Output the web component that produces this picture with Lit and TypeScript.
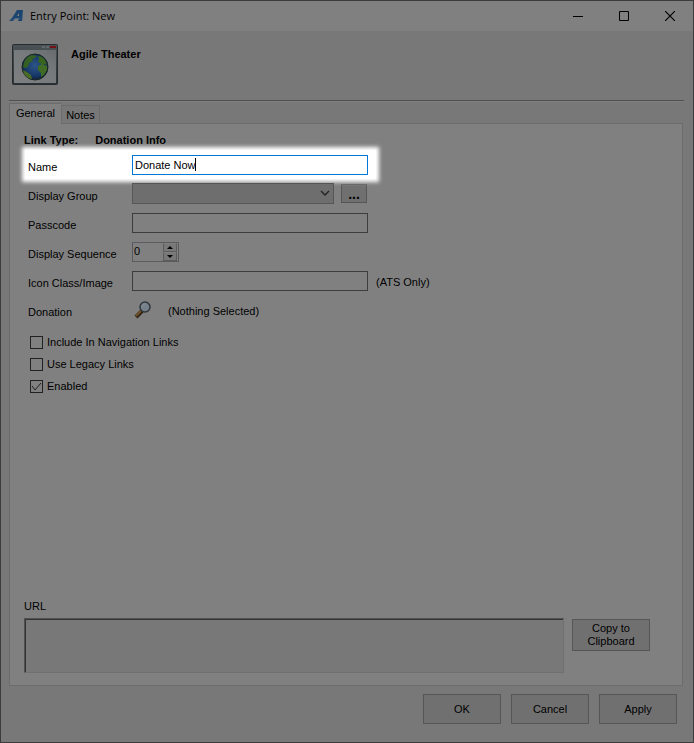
import { LitElement, html, css, svg } from "lit";
import { customElement, state } from "lit/decorators.js";

const logo = svg`
  <path fill-rule="evenodd" d="M8 1h6l-1 11H9l1-3H6l-2 3H0l3-3zM10 4 8 7h2z" fill="#1b456e"/>
  <path d="M1 12c4-3 9-4 15-3-6 0-10 1-15 3z" fill="#3c6488"/>`;

const globeWindow = svg`
  <defs>
    <linearGradient id="bar" x1="0" y1="0" x2="0" y2="1">
      <stop offset="0" stop-color="#4b5357"/><stop offset="1" stop-color="#2b3236"/>
    </linearGradient>
    <linearGradient id="pane" x1="0" y1="1" x2="1" y2="0">
      <stop offset="0" stop-color="#7d7f80"/><stop offset=".6" stop-color="#777a7c"/><stop offset="1" stop-color="#686c6e"/>
    </linearGradient>
    <radialGradient id="sea" cx=".5" cy=".45" r=".55">
      <stop offset="0" stop-color="#2d5686"/><stop offset=".7" stop-color="#173869"/><stop offset="1" stop-color="#10213b"/>
    </radialGradient>
  </defs>
  <rect x=".5" y=".5" width="45" height="40" rx="1" fill="url(#bar)" stroke="#252b2e"/>
  <rect x="2" y="6" width="42" height="33" fill="url(#pane)"/>
  <path d="M30 3h3M34 3h3" stroke="#7b8184"/>
  <path d="M38 3h6" stroke="#751218" stroke-width="2"/>
  <circle cx="23" cy="23" r="13" fill="url(#sea)" stroke="#18261e"/>
  <path d="M12 19c1-4 4-7 8-8l5 1-2 2-3 1 1 2-4 2-1 4-3 1-2-1z" fill="#356022"/>
  <path d="M26 12c4 0 7 3 8 6l1 3-2-1-2 1-3-2-2-1 1-3z" fill="#39641f"/>
  <path d="M26 22l4-2 5 2v4l-3 5-3 2v-4l-3-3z" fill="#3f6b25"/>
  <path d="M11 26l4 2 4 3 1 4-4-1-4-4z" fill="#4a6b25"/>`;

const magnifier = svg`
  <path d="M2 16 8 10" stroke="#2c2113" stroke-width="4"/>
  <path d="M2 15 7 10" stroke="#755429" stroke-width="2"/>
  <circle cx="11" cy="6" r="5" fill="#75808a" stroke="#30373c" stroke-width="1.5"/>
  <path d="M8 6c0-2 1-3 3-3" stroke="#8c949b" fill="none"/>`;

@customElement("app-root")
export class AppRoot extends LitElement {
  @state() private sequence = 0;

  static styles = css`
    :host {
      display: block;
      font: 11px/14px "Liberation Sans", Arial, sans-serif;
      color: #000;
    }
    * { box-sizing: border-box; }
    button, input, select, textarea { font: inherit; color: inherit; margin: 0; border-radius: 0; outline: 0; }
    svg { display: block; }
    .window {
      display: flex;
      flex-direction: column;
      min-height: 100vh;
      border: 1px solid #3c3c3c;
      background: #787878;
    }
    .titlebar {
      display: flex;
      align-items: center;
      height: 30px;
      padding-left: 8px;
      background: #808080;
    }
    .title { flex: 1; margin: 0 0 0 4px; font: 11px/16px "Open Sans", sans-serif; }
    .caption { width: 46px; height: 30px; padding: 0; border: 0; background: none; display: grid; place-items: center; }
    .header {
      display: flex;
      gap: 13px;
      height: 71px;
      margin: 0 9px 0 8px;
      padding: 13px 0 0 3px;
      border-bottom: 1px solid #808080;
      box-shadow: inset 0 -1px #505050;
    }
    .bold { font: bold 11px/14px "Liberation Sans", sans-serif; margin: 0; }
    .header .bold { padding-top: 3px; }
    .tabs { display: flex; align-items: flex-end; margin: 1px 8px 0; }
    .tab {
      width: 39px;
      height: 18px;
      padding: 0;
      border: 1px solid #6c6c6c;
      border-bottom: 0;
      background: #787878;
    }
    .tab.active {
      position: relative;
      width: 52px;
      height: 21px;
      margin-bottom: -1px;
      padding-bottom: 2px;
      border-right: 0;
      background: #808080;
    }
    .panel {
      display: flex;
      flex-direction: column;
      flex: 1;
      margin: 0 10px 0 8px;
      padding: 9px 0 12px 14px;
      border: 1px solid #6c6c6c;
      background: #808080;
    }
    .linktype { display: flex; gap: 17px; height: 17px; }
    .row { display: flex; align-items: center; height: 29px; padding-left: 4px; }
    .row.lit {
      position: relative;
      width: 351px;
      margin-left: 1px;
      padding-left: 3px;
      background: #fff;
      box-shadow: 0 0 4px 3px #fff;
    }
    .label { width: 104px; padding-top: 4px; }
    .field { position: relative; }
    .text { display: block; width: 236px; height: 20px; padding: 0 2px; border: 1px solid #3d3d3d; background: #808080; }
    .lit .text { border-color: #0078d7; background: #fff; }
    .caret { position: absolute; left: 63px; top: 3px; width: 1px; height: 13px; background: #000; }
    .combo { display: block; width: 202px; height: 21px; appearance: none; border: 1px solid #565656; background: #6e6e6e; }
    .chevron { position: absolute; right: 4px; top: 7px; pointer-events: none; }
    .button { border: 1px solid #565656; background: #707070; padding: 0; text-align: center; }
    .more { width: 26px; height: 19px; margin-left: 7px; font: bold 14px/14px "Liberation Sans", sans-serif; }
    .spin { display: flex; width: 47px; height: 20px; border: 1px solid #5a5a5f; background: #808080; }
    .number { width: 30px; padding: 0 1px 2px; border: 0; background: none; appearance: textfield; }
    .number::-webkit-inner-spin-button { appearance: none; }
    .steps { display: grid; width: 14px; height: 18px; grid-template-rows: 1fr 1fr; }
    .step { display: grid; place-items: center; padding: 0; border: 1px solid #5c5c5c; border-top-color: #808080; background: #787878; }
    .note { padding: 2px 0 0 8px; }
    .find { padding: 0; border: 0; background: none; margin-left: 2px; }
    .find + .note { padding-left: 16px; }
    .checks { display: grid; gap: 8px; padding: 11px 0 0 6px; }
    .check { display: flex; align-items: center; gap: 4px; width: max-content; }
    .box { appearance: none; width: 13px; height: 13px; border: 1px solid #222; display: grid; place-items: center; }
    .tick { position: relative; display: grid; }
    .tick svg { position: absolute; inset: 0; pointer-events: none; }
    .url { display: grid; grid-template-columns: 1fr 78px; column-gap: 8px; margin-top: auto; padding-right: 32px; }
    .url .caption-text { grid-column: 1 / -1; padding-bottom: 5px; }
    .output {
      height: 55px;
      resize: none;
      border: 1px solid #707070;
      border-top-color: #505050;
      border-left-color: #505050;
      box-shadow: inset 1px 1px #343434;
      background: #787878;
    }
    .copy { height: 32px; margin-top: 1px; line-height: 13px; }
    .footer { display: flex; justify-content: flex-end; gap: 10px; padding: 8px 16px 18px; }
    .footer .button { width: 78px; height: 30px; }
  `;

  render() {
    return html`
      <main class="window">
        <header class="titlebar">
          <svg width="17" height="14" viewBox="0 0 17 14" aria-hidden="true">${logo}</svg>
          <h1 class="title">Entry Point: New</h1>
          <button class="caption" aria-label="Minimize">
            <svg width="10" height="10"><path d="M0 5.5h10" stroke="#000"/></svg>
          </button>
          <button class="caption" aria-label="Maximize">
            <svg width="10" height="10"><path d="M.5.5h9v9h-9z" fill="none" stroke="#000"/></svg>
          </button>
          <button class="caption" aria-label="Close">
            <svg width="10" height="10"><path d="M0 0l10 10M10 0 0 10" stroke="#000" stroke-width="1.2"/></svg>
          </button>
        </header>
        <section class="header">
          <svg width="46" height="41" viewBox="0 0 46 41" aria-hidden="true">${globeWindow}</svg>
          <h2 class="bold">Agile Theater</h2>
        </section>
        <nav class="tabs" role="tablist">
          <button class="tab active" role="tab" aria-selected="true">General</button>
          <button class="tab" role="tab" aria-selected="false">Notes</button>
        </nav>
        <section class="panel">
          <div class="linktype bold"><span>Link Type:</span><span>Donation Info</span></div>
          <div class="row lit">
            <label class="label" for="name">Name</label>
            <div class="field"><input class="text" id="name" value="Donate Now" /><span class="caret"></span></div>
          </div>
          <div class="row">
            <label class="label" for="group">Display Group</label>
            <div class="field">
              <select class="combo" id="group"><option></option></select>
              <svg class="chevron" width="10" height="7"><path d="M1 1l4 4 4-4" fill="none" stroke="#222" stroke-width="1.3"/></svg>
            </div>
            <button class="button more" aria-label="Browse groups">...</button>
          </div>
          <div class="row">
            <label class="label" for="pass">Passcode</label>
            <input class="text" id="pass" />
          </div>
          <div class="row">
            <label class="label" for="seq">Display Sequence</label>
            <div class="spin">
              <input class="number" id="seq" type="number" .value=${String(this.sequence)} />
              <div class="steps">
                <button class="step" aria-label="Increase" @click=${() => this.sequence++}>
                  <svg width="6" height="3"><path d="M0 3h6L3 0z"/></svg>
                </button>
                <button class="step" aria-label="Decrease" @click=${() => this.sequence--}>
                  <svg width="6" height="3"><path d="M0 0h6L3 3z"/></svg>
                </button>
              </div>
            </div>
          </div>
          <div class="row">
            <label class="label" for="icon">Icon Class/Image</label>
            <input class="text" id="icon" />
            <span class="note">(ATS Only)</span>
          </div>
          <div class="row">
            <span class="label">Donation</span>
            <button class="find" aria-label="Find donation">
              <svg width="18" height="18" viewBox="0 0 18 18">${magnifier}</svg>
            </button>
            <span class="note">(Nothing Selected)</span>
          </div>
          <div class="checks">
            ${["Include In Navigation Links", "Use Legacy Links", "Enabled"].map(
              (text, i) => html`
                <label class="check">
                  <span class="tick">
                    <input class="box" type="checkbox" ?checked=${i === 2} />
                    ${i === 2
                      ? html`<svg width="13" height="13"><path d="M2 6l3 4 6-7" fill="none" stroke="#222"/></svg>`
                      : null}
                  </span>
                  ${text}
                </label>
              `,
            )}
          </div>
          <div class="url">
            <label class="caption-text" for="url">URL</label>
            <textarea class="output" id="url" readonly></textarea>
            <button class="button copy">Copy to<br />Clipboard</button>
          </div>
        </section>
        <footer class="footer">
          <button class="button">OK</button>
          <button class="button">Cancel</button>
          <button class="button">Apply</button>
        </footer>
      </main>
    `;
  }
}
